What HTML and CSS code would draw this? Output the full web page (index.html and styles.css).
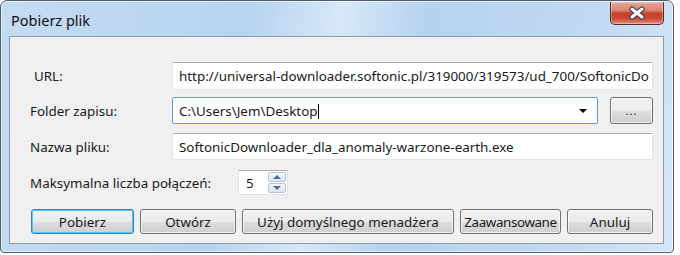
FILE: index.html
```html
<!DOCTYPE html>
<html lang="pl">
<head>
    <meta charset="UTF-8">
    <title>Pobierz plik</title>
    <link rel="stylesheet" href="styles.css">
</head>
<body>
    <!-- Okno dialogowe -->
    <div class="window">
        <div class="title-bar">
            <div class="title">Pobierz plik</div>
            <div class="close-btn">
                <svg width="22" height="14" viewBox="0 0 22 14">
                    <path d="M6 3 L16 11 M16 3 L6 11" stroke="#3b3b3b" stroke-width="5.2" stroke-linecap="round"/>
                    <path d="M6 3 L16 11 M16 3 L6 11" stroke="#ffffff" stroke-width="3" stroke-linecap="round"/>
                </svg>
            </div>
        </div>

        <div class="client">
            <div class="form-row row-url">
                <label class="label label-url">URL:</label>
                <div class="textbox">http://universal-downloader.softonic.pl/319000/319573/ud_700/SoftonicDo</div>
            </div>

            <div class="form-row row-folder">
                <label class="label">Folder zapisu:</label>
                <div class="combo">
                    <span class="combo-text">C:\Users\Jem\Desktop<span class="caret"></span></span>
                    <span class="combo-arrow"></span>
                </div>
                <div class="btn btn-browse">...</div>
            </div>

            <div class="form-row row-name">
                <label class="label">Nazwa pliku:</label>
                <div class="textbox">SoftonicDownloader_dla_anomaly-warzone-earth.exe</div>
            </div>

            <div class="form-row row-conn">
                <label class="label label-conn">Maksymalna liczba połączeń:</label>
                <div class="spin">
                    <div class="spin-value">5</div>
                    <div class="spin-buttons">
                        <div class="spin-up"></div>
                        <div class="spin-down"></div>
                    </div>
                </div>
            </div>

            <div class="button-row">
                <div class="btn btn-default w-pobierz">Pobierz</div>
                <div class="btn w-otworz">Otwórz</div>
                <div class="btn w-uzyj">Użyj domyślnego menadżera</div>
                <div class="btn w-zaaw">Zaawansowane</div>
                <div class="btn w-anuluj">Anuluj</div>
            </div>
        </div>
    </div>
</body>
</html>
```

FILE: styles.css
```css
body {
    margin: 0;
    background: #ffffff;
    font-family: "Noto Sans", "Open Sans", sans-serif;
    font-size: 13.4px;
    color: #1a1a1a;
}

/* Ramka okna */
.window {
    width: 672px;
    height: 251px;
    border: 1px solid #4e5d6f;
    border-radius: 7px 7px 4px 4px;
    background: linear-gradient(100deg, #c4dcf3 0%, #b7d3ef 35%, #d7e8f8 48%, #b6d2ef 60%, #c2daf2 85%, #d6e7f8 100%);
    box-shadow: inset 0 0 0 1px rgba(255, 255, 255, 0.6);
    display: flex;
    flex-direction: column;
}

.title-bar {
    height: 35px;
    display: flex;
    justify-content: space-between;
    align-items: flex-start;
}

.title {
    padding: 9px 0 0 10px;
    font-size: 14.5px;
    color: #111;
}

.close-btn {
    width: 52px;
    height: 22px;
    margin: 1px 9px 0 0;
    border: 1px solid #5a2a24;
    border-top: none;
    border-radius: 0 0 5px 5px;
    background: linear-gradient(#e9a89a 0%, #d8826f 40%, #c5412a 50%, #c94a32 75%, #e09080 100%);
    display: flex;
    justify-content: center;
    align-items: center;
    box-shadow: inset 0 0 0 1px rgba(255, 255, 255, 0.35);
}

/* Obszar roboczy */
.client {
    flex: 1;
    margin: 0 9px 8px 8px;
    border: 1px solid #8899ad;
    background: #f0f0f0;
    padding: 25px 10px 0 20px;
    display: flex;
    flex-direction: column;
}

.form-row {
    display: flex;
    align-items: center;
}

.row-url {
    height: 28px;
    margin-bottom: 7px;
}

.row-folder {
    height: 27px;
    margin-bottom: 9px;
}

.row-name {
    height: 27px;
    margin-bottom: 10px;
}

.row-conn {
    height: 25px;
    margin-bottom: 14px;
}

.label {
    width: 142px;
    flex-shrink: 0;
}

.label-url {
    padding-left: 4px;
    width: 138px;
}

.label-conn {
    width: 208px;
}

.textbox {
    flex: 1;
    height: 100%;
    box-sizing: border-box;
    background: #fff;
    border: 1px solid #e2e3ea;
    border-top-color: #abadb3;
    border-radius: 2px;
    padding: 0 6px;
    display: flex;
    align-items: center;
    white-space: nowrap;
    overflow: hidden;
}

.combo {
    width: 427px;
    height: 100%;
    box-sizing: border-box;
    background: #fff;
    border: 1px solid #569de5;
    border-radius: 2px;
    padding: 0 6px;
    display: flex;
    align-items: center;
    justify-content: space-between;
}

.caret {
    display: inline-block;
    width: 1px;
    height: 15px;
    background: #000;
    vertical-align: -3px;
}

.combo-arrow {
    width: 0;
    height: 0;
    border-left: 4px solid transparent;
    border-right: 4px solid transparent;
    border-top: 4px solid #000;
    margin-right: 4px;
}

/* Przyciski */
.btn {
    box-sizing: border-box;
    height: 25px;
    border: 1px solid #707070;
    border-radius: 3px;
    background: linear-gradient(#f2f2f2 0%, #ebebeb 50%, #dddddd 51%, #cfcfcf 100%);
    box-shadow: inset 0 0 0 1px rgba(255, 255, 255, 0.7);
    display: flex;
    align-items: center;
    justify-content: center;
    white-space: nowrap;
}

.btn-browse {
    width: 43px;
    height: 27px;
    margin-left: 12px;
    font-size: 11px;
    letter-spacing: 1px;
}

.btn-default {
    border-color: #3c7fb1;
    box-shadow: inset 0 0 0 1px #48cdfa;
}

.button-row {
    display: flex;
    gap: 6px;
    margin-left: 1px;
}

.w-pobierz { width: 103px; }
.w-otworz { width: 96px; }
.w-uzyj { width: 212px; }
.w-zaaw { width: 101px; letter-spacing: -0.4px; }
.w-anuluj { width: 86px; }

/* Pole liczby */
.spin {
    display: flex;
    height: 100%;
    width: 50px;
    box-sizing: border-box;
    background: #fff;
    border: 1px solid #e2e3ea;
    border-top-color: #abadb3;
}

.spin-value {
    flex: 1;
    padding-left: 7px;
    display: flex;
    align-items: center;
}

.spin-buttons {
    width: 18px;
    display: flex;
    flex-direction: column;
    gap: 1px;
    padding: 1px;
}

.spin-up,
.spin-down {
    flex: 1;
    border: 1px solid #b5c3d6;
    border-radius: 2px;
    background: linear-gradient(#f4f7fb, #dde5ef);
    display: flex;
    align-items: center;
    justify-content: center;
}

.spin-up::after {
    content: "";
    border-left: 4px solid transparent;
    border-right: 4px solid transparent;
    border-bottom: 4px solid #4a6ea0;
}

.spin-down::after {
    content: "";
    border-left: 4px solid transparent;
    border-right: 4px solid transparent;
    border-top: 4px solid #4a6ea0;
}
```
